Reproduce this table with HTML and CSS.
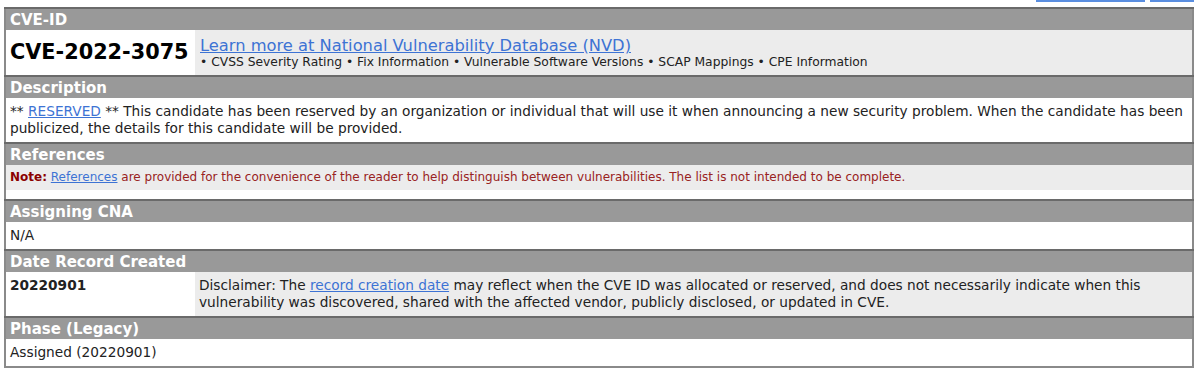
FILE: index.html
```html
<!DOCTYPE html>
<html lang="en">
<head>
    <meta charset="UTF-8">
    <meta name="viewport" content="width=device-width, initial-scale=1.0">
    <title>CVE-2022-3075</title>
    <link rel="stylesheet" href="styles.css">
</head>
<body>
    <!-- clipped links from the row above -->
    <div class="top-links">
        <span class="top-link wide"></span>
        <span class="top-link"></span>
    </div>

    <table class="cve-table">
        <tr>
            <th colspan="2">CVE-ID</th>
        </tr>
        <tr>
            <td class="cve-id">CVE-2022-3075</td>
            <td class="grey nvd">
                <a href="#" class="nvd-link">Learn more at National Vulnerability Database (NVD)</a>
                <div class="nvd-items">&bull; CVSS Severity Rating &bull; Fix Information &bull; Vulnerable Software Versions &bull; SCAP Mappings &bull; CPE Information</div>
            </td>
        </tr>
        <tr>
            <th colspan="2">Description</th>
        </tr>
        <tr>
            <td colspan="2">** <a href="#">RESERVED</a> ** This candidate has been reserved by an organization or individual that will use it when announcing a new security problem. When the candidate has been publicized, the details for this candidate will be provided.</td>
        </tr>
        <tr>
            <th colspan="2">References</th>
        </tr>
        <tr>
            <td colspan="2" class="grey note"><b>Note:</b> <a href="#">References</a> are provided for the convenience of the reader to help distinguish between vulnerabilities. The list is not intended to be complete.</td>
        </tr>
        <tr>
            <td colspan="2" class="spacer"></td>
        </tr>
        <tr>
            <th colspan="2">Assigning CNA</th>
        </tr>
        <tr>
            <td colspan="2">N/A</td>
        </tr>
        <tr>
            <th colspan="2">Date Record Created</th>
        </tr>
        <tr>
            <td class="date"><b>20220901</b></td>
            <td class="grey">Disclaimer: The <a href="#">record creation date</a> may reflect when the CVE ID was allocated or reserved, and does not necessarily indicate when this vulnerability was discovered, shared with the affected vendor, publicly disclosed, or updated in CVE.</td>
        </tr>
        <tr>
            <th colspan="2">Phase (Legacy)</th>
        </tr>
        <tr>
            <td colspan="2">Assigned (20220901)</td>
        </tr>
    </table>
</body>
</html>
```

FILE: styles.css
```css
body {
    margin: 0;
    padding: 0 6px 0 4px;
    background: #fff;
    font-family: Verdana, "DejaVu Sans", sans-serif;
    font-size: 13.7px;
    color: #222;
    overflow: hidden;
}
a {
    color: #3d73d4;
}
.top-links {
    display: flex;
    justify-content: flex-end;
    gap: 5px;
    height: 7px;
}
.top-link {
    display: block;
    width: 44px;
    height: 2px;
    background: #5a8ee0;
}
.top-link.wide {
    width: 109px;
}
.cve-table {
    width: 100%;
    border-collapse: collapse;
    border: 2px solid #8a8a8a;
    border-top-color: #555;
}
.cve-table th {
    background-color: #999;
    color: #fff;
    font-size: 15px;
    font-weight: bold;
    text-align: left;
    padding: 2px 4px 1px;
    line-height: 18px;
    border-top: 2px solid #6a6a6a;
}
.cve-table td {
    padding: 5px 4px;
    line-height: 17px;
    vertical-align: top;
}
.grey {
    background-color: #ececec;
}
.cve-id {
    width: 181px;
    font-size: 20.8px;
    font-weight: bold;
    color: #000;
    white-space: nowrap;
    vertical-align: middle !important;
}
.cve-table td.nvd {
    padding: 6px 4px 6px 5px;
}
.nvd-link {
    font-size: 16.3px;
    line-height: 19px;
}
.nvd-items {
    font-size: 12.3px;
    line-height: 14px;
}
.cve-table td.note {
    padding: 4px;
    font-size: 12px;
    color: #992222;
}
.note b {
    color: #8b0000;
}
.cve-table td.spacer {
    padding: 0;
    height: 9px;
}
.date {
    width: 181px;
}
```
